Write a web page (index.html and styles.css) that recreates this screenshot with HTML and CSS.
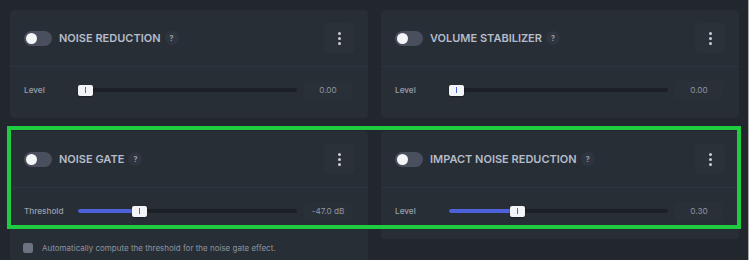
FILE: index.html
```html
<!DOCTYPE html>
<html>
<head>
    <link rel="stylesheet" href="styles.css">
</head>

<body>
    <div class="page">
        <div class="effects">
            <div class="card">
                <div class="card-header">
                    <span class="toggle"><span class="knob"></span></span>
                    <span class="title">Noise reduction</span>
                    <span class="help">?</span>
                    <button class="menu-btn">
                        <svg width="3" height="13" viewBox="0 0 3 13"><circle cx="1.5" cy="1.5" r="1.5"/><circle cx="1.5" cy="6.5" r="1.5"/><circle cx="1.5" cy="11.5" r="1.5"/></svg>
                    </button>
                </div>
                <div class="card-body">
                    <div class="slider-row">
                        <span class="label">Level</span>
                        <div class="slider" style="--p: 0">
                            <div class="track"></div>
                            <div class="thumb"><i></i></div>
                        </div>
                        <span class="value">0.00</span>
                    </div>
                </div>
            </div>

            <div class="card">
                <div class="card-header">
                    <span class="toggle"><span class="knob"></span></span>
                    <span class="title">Volume stabilizer</span>
                    <span class="help">?</span>
                    <button class="menu-btn">
                        <svg width="3" height="13" viewBox="0 0 3 13"><circle cx="1.5" cy="1.5" r="1.5"/><circle cx="1.5" cy="6.5" r="1.5"/><circle cx="1.5" cy="11.5" r="1.5"/></svg>
                    </button>
                </div>
                <div class="card-body">
                    <div class="slider-row">
                        <span class="label">Level</span>
                        <div class="slider" style="--p: 0">
                            <div class="track"></div>
                            <div class="thumb"><i></i></div>
                        </div>
                        <span class="value">0.00</span>
                    </div>
                </div>
            </div>

            <div class="card">
                <div class="card-header">
                    <span class="toggle"><span class="knob"></span></span>
                    <span class="title">Noise gate</span>
                    <span class="help">?</span>
                    <button class="menu-btn">
                        <svg width="3" height="13" viewBox="0 0 3 13"><circle cx="1.5" cy="1.5" r="1.5"/><circle cx="1.5" cy="6.5" r="1.5"/><circle cx="1.5" cy="11.5" r="1.5"/></svg>
                    </button>
                </div>
                <div class="card-body">
                    <div class="slider-row">
                        <span class="label">Threshold</span>
                        <div class="slider" style="--p: 0.263">
                            <div class="track"><div class="fill"></div></div>
                            <div class="thumb"><i></i></div>
                        </div>
                        <span class="value">-47.0 dB</span>
                    </div>
                    <label class="check-row">
                        <span class="checkbox"></span>
                        Automatically compute the threshold for the noise gate effect.
                    </label>
                </div>
            </div>

            <div class="card">
                <div class="card-header">
                    <span class="toggle"><span class="knob"></span></span>
                    <span class="title">Impact noise reduction</span>
                    <span class="help">?</span>
                    <button class="menu-btn">
                        <svg width="3" height="13" viewBox="0 0 3 13"><circle cx="1.5" cy="1.5" r="1.5"/><circle cx="1.5" cy="6.5" r="1.5"/><circle cx="1.5" cy="11.5" r="1.5"/></svg>
                    </button>
                </div>
                <div class="card-body">
                    <div class="slider-row">
                        <span class="label">Level</span>
                        <div class="slider" style="--p: 0.30">
                            <div class="track"><div class="fill"></div></div>
                            <div class="thumb"><i></i></div>
                        </div>
                        <span class="value">0.30</span>
                    </div>
                </div>
            </div>
        </div>

        <div class="highlight"></div>
    </div>
</body>
</html>
```

FILE: styles.css
```css
html, body {
    margin: 0;
    height: 100%;
}

body {
    background-color: #22272e;
    font-family: Inter, "Noto Sans", sans-serif;
    border-right: 1px solid #a9abaf;
    box-sizing: border-box;
    overflow: hidden;
}

.page {
    position: relative;
    padding: 10px 9px 0 10px;
}

.effects {
    display: grid;
    grid-template-columns: 1fr 1fr;
    column-gap: 13px;
    row-gap: 13px;
    align-items: start;
}

.card {
    background-color: #282e36;
    border-radius: 4px;
}

.card-header {
    display: flex;
    align-items: center;
    height: 56px;
    padding: 0 14px 0 14px;
    border-bottom: 1px solid #2f353e;
}

.toggle {
    position: relative;
    width: 28px;
    height: 15px;
    border-radius: 8px;
    background-color: #4a4f5d;
    flex-shrink: 0;
}

.toggle .knob {
    position: absolute;
    left: 2px;
    top: 2px;
    width: 11px;
    height: 11px;
    border-radius: 50%;
    background-color: #f4f5f7;
}

.title {
    margin-left: 7px;
    font-size: 11px;
    font-weight: 600;
    text-transform: uppercase;
    color: #b5bcca;
}

.help {
    margin-left: 4px;
    width: 14px;
    height: 14px;
    border-radius: 50%;
    background-color: #2f353e;
    color: #9ca2ad;
    font-size: 7px;
    font-weight: 700;
    display: flex;
    align-items: center;
    justify-content: center;
}

.menu-btn {
    margin-left: auto;
    width: 30px;
    height: 30px;
    border: none;
    border-radius: 3px;
    background-color: #2b3139;
    display: flex;
    align-items: center;
    justify-content: center;
    padding: 0;
}

.menu-btn svg {
    fill: #c8cdd6;
}

.card-body {
    padding: 14px 16px 19px 14px;
}

.slider-row {
    display: flex;
    align-items: center;
    height: 18px;
}

.label {
    width: 54px;
    flex-shrink: 0;
    font-size: 8.2px;
    font-weight: 500;
    color: #9aa0aa;
}

.slider {
    position: relative;
    flex: 1;
    height: 11px;
    display: flex;
    align-items: center;
}

.track {
    width: 100%;
    height: 4px;
    border-radius: 2px;
    background-color: #1c2026;
    overflow: hidden;
}

.fill {
    height: 100%;
    width: calc(var(--p) * (100% - 15px) + 7px);
    background-color: #4d62d8;
}

.thumb {
    position: absolute;
    top: 0;
    left: calc(var(--p) * (100% - 15px));
    width: 15px;
    height: 11px;
    background-color: #f2f4f7;
    border-radius: 2px;
    box-shadow: 0 1px 2px rgba(0, 0, 0, 0.4);
    display: flex;
    align-items: center;
    justify-content: center;
}

.thumb i {
    display: block;
    width: 1px;
    height: 6px;
    background-color: #4d62d8;
}

.value {
    margin-left: 7px;
    width: 48px;
    height: 18px;
    border-radius: 2px;
    background-color: #2a3038;
    color: #8f96a2;
    font-size: 8.2px;
    display: flex;
    align-items: center;
    justify-content: center;
    flex-shrink: 0;
}

.check-row {
    display: flex;
    align-items: center;
    margin-top: 23px;
    margin-left: -1px;
    font-size: 8px;
    color: #8d949f;
}

.checkbox {
    width: 10px;
    height: 10px;
    border-radius: 2px;
    background-color: #6c7280;
    margin-right: 9px;
}

.highlight {
    position: absolute;
    left: 7px;
    top: 126px;
    width: 726px;
    height: 95px;
    border: 4px solid #1fcb40;
}
```
